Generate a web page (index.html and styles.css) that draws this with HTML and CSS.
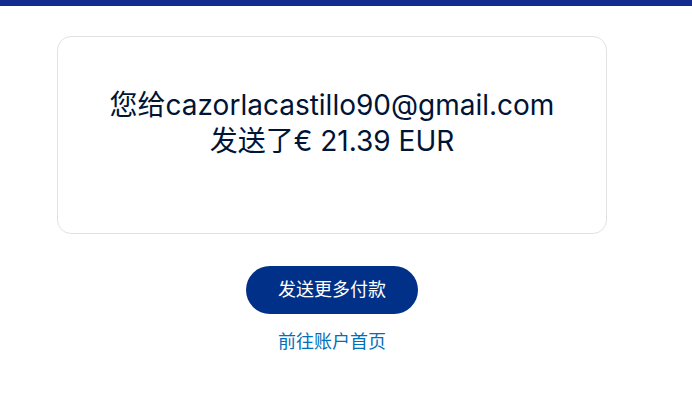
FILE: index.html
```html
<!DOCTYPE html>
<html lang="zh-CN">
<head>
  <meta charset="UTF-8" />
  <title>付款已发送</title>
  <link rel="stylesheet" href="styles.css">
</head>
<body>
  <div class="topbar"></div>
  <div class="container">
    <div class="card">
      <h1 class="message">您给cazorlacastillo90@gmail.com<br>发送了€ 21.39 EUR</h1>
    </div>
    <div class="actions">
      <a class="btn" href="#">发送更多付款</a>
      <a class="link" href="#">前往账户首页</a>
    </div>
  </div>
</body>
</html>
```

FILE: styles.css
```css
body {
  margin: 0;
  font-family: Inter, "Noto Sans CJK SC", sans-serif;
  background: #fff;
  color: #001435;
}
.topbar {
  height: 6px;
  background: #142c8e;
}
.container {
  width: 550px;
  margin-left: 57px;
  padding-top: 30px;
}
.card {
  box-sizing: border-box;
  height: 198px;
  border: 1px solid #e2e2e2;
  border-radius: 14px;
  padding-top: 50px;
  text-align: center;
}
.message {
  margin: 0;
  font-size: 28px;
  font-weight: 400;
  line-height: 36px;
}
.actions {
  display: flex;
  flex-direction: column;
  align-items: center;
  padding-top: 32px;
}
.btn {
  display: block;
  width: 172px;
  height: 48px;
  line-height: 48px;
  border-radius: 24px;
  background: #003087;
  color: #fff;
  font-size: 18px;
  text-align: center;
  text-decoration: none;
}
.link {
  margin-top: 15px;
  color: #0070ba;
  font-size: 18px;
  line-height: 26px;
  text-decoration: none;
}
```
